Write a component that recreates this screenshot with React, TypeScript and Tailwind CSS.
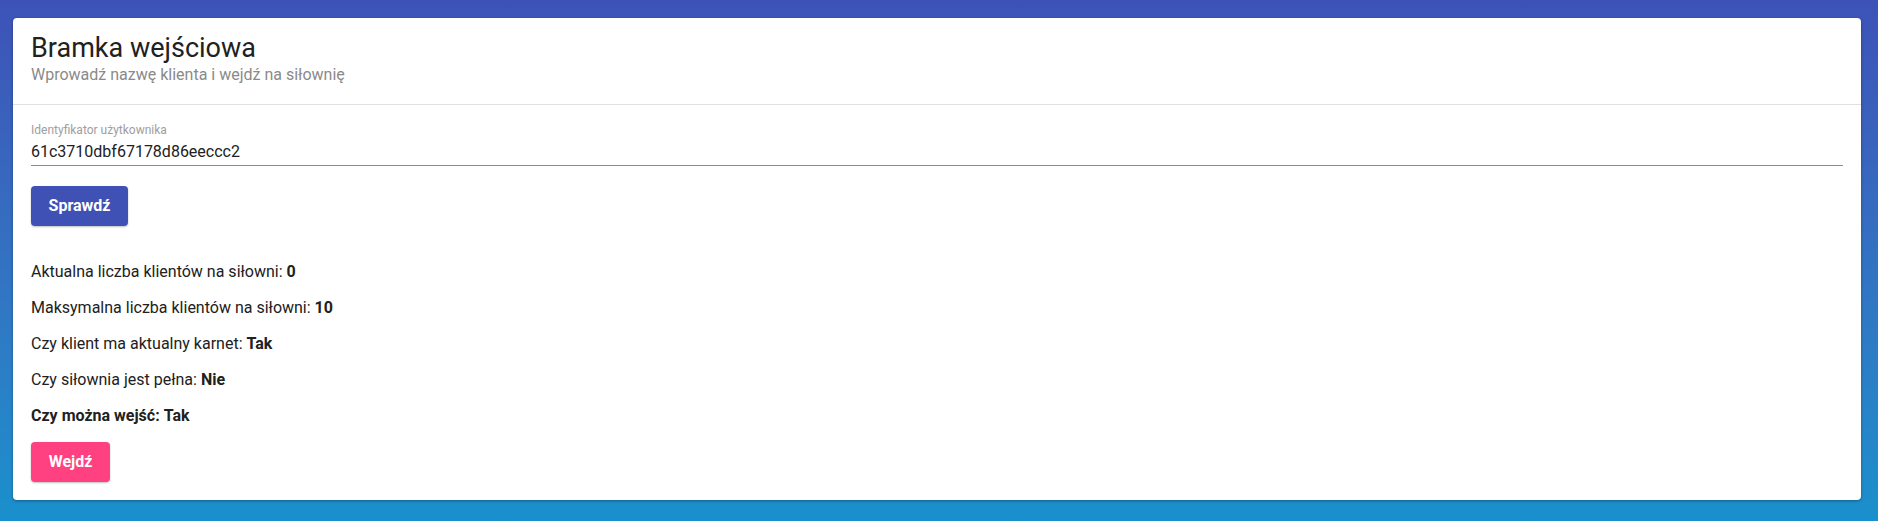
import React, { useState } from "react";

type StatProps = {
  label: string;
  value: string;
  allBold?: boolean;
};

const Stat: React.FC<StatProps> = ({ label, value, allBold }) => (
  <p className={`h-[36px] flex items-center text-[16px] ${allBold ? "font-bold" : ""}`}>
    {label}&nbsp;<span className="font-bold">{value}</span>
  </p>
);

const App: React.FC = () => {
  const [userId, setUserId] = useState("61c3710dbf67178d86eeccc2");

  return (
    <div className="min-h-[521px] w-full bg-gradient-to-b from-[#3d52b7] to-[#1890cc] pt-[18px] pb-[20px] pl-[13px] pr-[17px] font-['Roboto',sans-serif] text-[#212121]">
      <div className="bg-white rounded-[4px] shadow-[0_1px_3px_rgba(0,0,0,0.35)]">
        {/* Header */}
        <div className="px-[18px] pt-[14px] pb-[18px] border-b border-[#e0e0e0]">
          <h1 className="text-[27px] leading-[32px] font-normal">Bramka wejściowa</h1>
          <p className="text-[16px] leading-[22px] text-[#8a8a8a]">Wprowadź nazwę klienta i wejdź na siłownię</p>
        </div>

        {/* Body */}
        <div className="px-[18px] pt-[18px] pb-[18px]">
          <label className="block text-[12px] leading-[14px] text-[#9e9e9e]">Identyfikator użytkownika</label>
          <input
            value={userId}
            onChange={(e) => setUserId(e.target.value)}
            className="w-full h-[29px] text-[16px] border-b border-[#8c8c8c] outline-none bg-transparent"
          />

          <button className="mt-[20px] h-[40px] w-[97px] rounded-[4px] bg-[#3f51b5] text-white text-[16px] font-bold shadow-[0_1px_2px_rgba(0,0,0,0.25)]">
            Sprawdź
          </button>

          <div className="mt-[28px]">
            <Stat label="Aktualna liczba klientów na siłowni:" value="0" />
            <Stat label="Maksymalna liczba klientów na siłowni:" value="10" />
            <Stat label="Czy klient ma aktualny karnet:" value="Tak" />
            <Stat label="Czy siłownia jest pełna:" value="Nie" />
            <Stat label="Czy można wejść:" value="Tak" allBold />
          </div>

          <button className="mt-[8px] h-[40px] w-[79px] rounded-[4px] bg-[#ff4081] text-white text-[16px] font-bold shadow-[0_1px_2px_rgba(0,0,0,0.25)]">
            Wejdź
          </button>
        </div>
      </div>
    </div>
  );
};

export default App;
